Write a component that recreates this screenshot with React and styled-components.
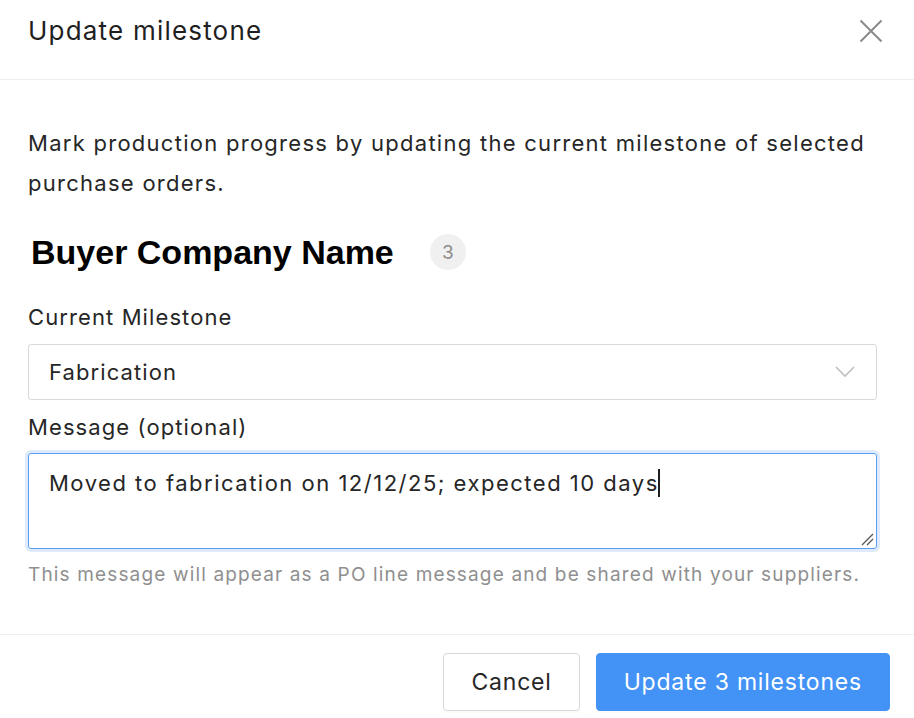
import React from "react";
import styled, { createGlobalStyle } from "styled-components";

const Global = createGlobalStyle`
  html, body { margin: 0; padding: 0; background: #fff; }
  body { font-family: Inter, "Noto Sans", sans-serif; color: #262626; }
  * { box-sizing: border-box; }
`;

const Modal = styled.div`
  width: 914px;
  height: 718px;
  display: flex;
  flex-direction: column;
  background: #fff;
`;

const Header = styled.div`
  height: 80px;
  display: flex;
  align-items: center;
  justify-content: space-between;
  padding: 0 31px 18px 28px;
  border-bottom: 1px solid #efefef;
`;

const Title = styled.h1`
  margin: 0;
  font-size: 26px;
  font-weight: 400;
  color: #1f1f1f;
  letter-spacing: 1.2px;
`;

const CloseButton = styled.button`
  border: none;
  background: none;
  padding: 0;
  width: 24px;
  height: 24px;
  display: flex;
  align-items: center;
  justify-content: center;
  cursor: pointer;
`;

const Body = styled.div`
  flex: 1;
  padding: 43px 37px 0 28px;
  display: flex;
  flex-direction: column;
`;

const Description = styled.p`
  margin: 0;
  font-size: 22px;
  line-height: 40px;
  letter-spacing: 1.27px;
  color: #262626;
`;

const CompanyRow = styled.div`
  display: flex;
  align-items: center;
  gap: 36px;
  margin-top: 29px;
  padding-left: 3px;
`;

const CompanyName = styled.h2`
  margin: 0;
  font-family: "Liberation Sans", Arial, sans-serif;
  font-weight: 700;
  font-size: 34px;
  line-height: 40px;
  color: #000;
`;

const Badge = styled.span`
  width: 36px;
  height: 36px;
  border-radius: 50%;
  background: #f0f0f0;
  color: #8c8c8c;
  font-size: 19px;
  display: flex;
  align-items: center;
  justify-content: center;
`;

const Label = styled.label`
  display: block;
  font-size: 22px;
  line-height: 32px;
  letter-spacing: 1.1px;
  color: #262626;
  margin-top: ${(p) => p.$mt || 0}px;
  margin-bottom: ${(p) => p.$mb || 11}px;
`;

const Select = styled.div`
  height: 56px;
  border: 1px solid #d9d9d9;
  border-radius: 3px;
  display: flex;
  align-items: center;
  justify-content: space-between;
  padding: 0 21px 0 20px;
  font-size: 22px;
  letter-spacing: 1.1px;
  color: #262626;
`;

const TextArea = styled.div`
  position: relative;
  height: 96px;
  border: 1px solid #5a9ff5;
  border-radius: 3px;
  box-shadow: 0 0 0 3px rgba(66, 146, 246, 0.18);
  padding: 13px 20px;
  font-size: 22px;
  line-height: 32px;
  letter-spacing: 1.5px;
  color: #262626;
`;

const Caret = styled.span`
  display: inline-block;
  width: 2px;
  height: 28px;
  background: #1f1f1f;
  vertical-align: -6px;
  margin-left: -1px;
`;

const Grip = styled.svg`
  position: absolute;
  right: 2px;
  bottom: 2px;
`;

const Help = styled.div`
  font-size: 19px;
  color: #8f8f8f;
  margin-top: 14px;
  letter-spacing: 1.15px;
`;

const Footer = styled.div`
  height: 84px;
  border-top: 1px solid #efefef;
  display: flex;
  justify-content: flex-end;
  align-items: flex-start;
  gap: 16px;
  padding: 18px 24px 0 0;
`;

const Button = styled.button`
  height: 58px;
  padding: 0 27px;
  font-family: Inter, "Noto Sans", sans-serif;
  font-size: 23px;
  letter-spacing: 0.8px;
  border-radius: 4px;
  cursor: pointer;
  border: 1px solid ${(p) => (p.$primary ? "#4392f6" : "#d9d9d9")};
  background: ${(p) => (p.$primary ? "#4392f6" : "#fff")};
  color: ${(p) => (p.$primary ? "#fff" : "#262626")};
  box-shadow: 0 2px 0 rgba(0, 0, 0, 0.02);
`;

export default function App() {
  return (
    <>
      <Global />
      <Modal>
        <Header>
          <Title>Update milestone</Title>
          <CloseButton aria-label="Close">
            <svg width="24" height="24" viewBox="0 0 24 24">
              <path d="M1.5 1.5 L22.5 22.5 M22.5 1.5 L1.5 22.5" stroke="#8a8a8a" strokeWidth="2" fill="none" />
            </svg>
          </CloseButton>
        </Header>
        <Body>
          <Description>
            Mark production progress by updating the current milestone of selected purchase orders.
          </Description>
          <CompanyRow>
            <CompanyName>Buyer Company Name</CompanyName>
            <Badge>3</Badge>
          </CompanyRow>
          <Label $mt={29}>Current Milestone</Label>
          <Select>
            <span>Fabrication</span>
            <svg width="20" height="12" viewBox="0 0 20 12">
              <path d="M1 1 L10 10 L19 1" stroke="#bfbfbf" strokeWidth="1.6" fill="none" />
            </svg>
          </Select>
          <Label $mt={11} $mb={10}>Message (optional)</Label>
          <TextArea>
            Moved to fabrication on 12/12/25; expected 10 days<Caret />
            <Grip width="14" height="14" viewBox="0 0 14 14">
              <path d="M2 13 L13 2 M7 13 L13 7" stroke="#555" strokeWidth="1.3" fill="none" />
            </Grip>
          </TextArea>
          <Help>This message will appear as a PO line message and be shared with your suppliers.</Help>
        </Body>
        <Footer>
          <Button>Cancel</Button>
          <Button $primary>Update 3 milestones</Button>
        </Footer>
      </Modal>
    </>
  );
}
